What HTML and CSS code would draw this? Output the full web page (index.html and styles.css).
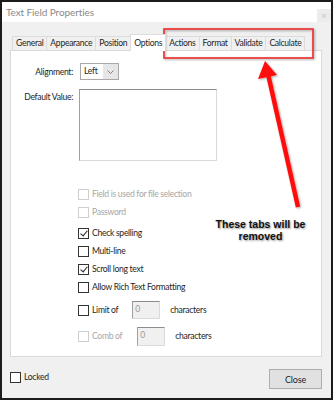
FILE: index.html
```html
<!DOCTYPE html>
<html lang="en">
<head>
    <meta charset="UTF-8">
    <title>Text Field Properties</title>
    <link rel="stylesheet" href="styles.css">
</head>
<body>

    <div class="window">
        <div class="titlebar">
            <span class="title">Text Field Properties</span>
            <span class="close-x">&times;</span>
        </div>

        <div class="body">
            <div class="tabs">
                <div class="tab">General</div>
                <div class="tab">Appearance</div>
                <div class="tab">Position</div>
                <div class="tab active">Options</div>
                <div class="tab">Actions</div>
                <div class="tab">Format</div>
                <div class="tab">Validate</div>
                <div class="tab">Calculate</div>
            </div>

            <div class="panel">
                <div class="field-row">
                    <label class="field-label">Alignment:</label>
                    <div class="select">
                        <span class="select-value">Left</span>
                        <span class="select-arrow">
                            <svg width="7" height="4" viewBox="0 0 7 4"><path d="M0.5 0.5 L3.5 3.5 L6.5 0.5" fill="none" stroke="#777" stroke-width="0.9"/></svg>
                        </span>
                    </div>
                </div>
                <div class="field-row top">
                    <label class="field-label">Default Value:</label>
                    <div class="textarea"></div>
                </div>

                <div class="checks">
                    <div class="check disabled"><span class="box"></span>Field is used for file selection</div>
                    <div class="check disabled"><span class="box"></span>Password</div>
                    <div class="check gap"><span class="box checked"></span>Check spelling</div>
                    <div class="check"><span class="box"></span>Multi-line</div>
                    <div class="check"><span class="box checked"></span>Scroll long text</div>
                    <div class="check"><span class="box"></span>Allow Rich Text Formatting</div>
                    <div class="check limit"><span class="box"></span>Limit of<span class="num num-limit">0</span>characters</div>
                    <div class="check comb disabled"><span class="box"></span>Comb of<span class="num num-comb">0</span><span class="dark">characters</span></div>
                </div>
            </div>

            <div class="footer">
                <div class="check locked"><span class="box"></span>Locked</div>
                <button class="close-btn">Close</button>
            </div>
        </div>

        <!-- annotation drawn over the dialog -->
        <svg class="overlay" width="333" height="400" viewBox="0 0 333 400">
            <defs>
                <filter id="shadow" x="-20%" y="-20%" width="140%" height="140%">
                    <feDropShadow dx="1" dy="1" stdDeviation="0.8" flood-color="#000" flood-opacity="0.35"/>
                </filter>
            </defs>
            <rect x="164" y="29" width="149" height="29" fill="none" stroke="#ec2d2d" stroke-width="1.6" filter="url(#shadow)"/>
            <g filter="url(#shadow)">
                <line x1="298" y1="207" x2="268" y2="74" stroke="#ff0f0f" stroke-width="4.5"/>
                <polygon points="265,61 258,79 277,75" fill="#ff0f0f"/>
            </g>
        </svg>
        <div class="note">These tabs will be<br>removed</div>
    </div>

</body>
</html>
```

FILE: styles.css
```css
* {
    margin: 0;
    padding: 0;
    box-sizing: border-box;
}

body {
    font-family: Lato, "Open Sans", sans-serif;
    font-size: 8.6px;
    letter-spacing: -0.3px;
    color: #1e1e1e;
    background: #fff;
}

.window {
    position: relative;
    width: 333px;
    height: 400px;
    border: 2px solid #1c1c1c;
    display: flex;
    flex-direction: column;
    background: #f0f0f0;
}

.titlebar {
    height: 20px;
    background: #fff;
    display: flex;
    align-items: center;
    justify-content: space-between;
    padding-left: 4px;
}

.title {
    font-size: 10px;
    letter-spacing: -0.1px;
    color: #8a8a8a;
}

.close-x {
    width: 14px;
    height: 13px;
    margin-top: 6px;
    background: #ececec;
    color: #c8c8c8;
    font-size: 10px;
    line-height: 13px;
    text-align: center;
}

.body {
    flex: 1;
    display: flex;
    flex-direction: column;
    padding: 0 9px 0 8px;
}

/* tabs */
.tabs {
    display: flex;
    align-items: flex-end;
    margin-top: 11px;
    padding-left: 2px;
    height: 17px;
}

.tab {
    height: 14px;
    padding: 0 3px;
    line-height: 13px;
    background: #f0f0f0;
    border: 1px solid #dcdcdc;
    border-bottom: none;
    margin-right: -1px;
}

.tab.active {
    height: 17px;
    line-height: 16px;
    background: #fff;
    position: relative;
    z-index: 1;
    margin-bottom: -1px;
    padding: 0 3px;
}

/* white panel */
.panel {
    height: 307px;
    background: #fff;
    border: 1px solid #d9d9d9;
    padding-top: 12px;
}

.field-row {
    display: flex;
    align-items: center;
    margin-bottom: 9px;
}

.field-row.top {
    align-items: flex-start;
}

.field-label {
    width: 62px;
    text-align: right;
    margin-right: 7px;
}

.field-row.top .field-label {
    margin-top: 3px;
    margin-right: 6px;
}

.select {
    width: 39px;
    height: 17px;
    border: 1px solid #a9a9a9;
    display: flex;
    background: #fff;
}

.select-value {
    flex: 1;
    padding-left: 3px;
    line-height: 15px;
}

.select-arrow {
    width: 15px;
    background: #e6e6e6;
    display: flex;
    align-items: center;
    justify-content: center;
}

.textarea {
    width: 138px;
    height: 72px;
    border: 1px solid #dadada;
    border-top-color: #8c8c8c;
    border-left-color: #a0a0a0;
}

/* checkboxes */
.checks {
    margin-top: 24px;
    padding-left: 67px;
}

.check {
    display: flex;
    align-items: center;
    height: 18px;
}

.check.gap {
    margin-top: 3px;
}

.check.limit {
    margin-top: 5px;
}

.check.comb {
    margin-top: 8px;
}

.box {
    width: 11px;
    height: 11px;
    border: 1px solid #333;
    background: #fff;
    margin-right: 3px;
    flex-shrink: 0;
    position: relative;
}

.box.checked::after {
    content: "";
    position: absolute;
    left: 3px;
    top: 0px;
    width: 3px;
    height: 6px;
    border-right: 1px solid #222;
    border-bottom: 1px solid #222;
    transform: rotate(40deg);
}

.check.disabled {
    color: #a6a6a6;
}

.check.disabled .box {
    border-color: #cfcfcf;
}

.dark {
    color: #1e1e1e;
}

.num {
    height: 18px;
    width: 28px;
    background: #f0f0f0;
    border: 1px solid #dadada;
    border-top-color: #8c8c8c;
    border-left-color: #a0a0a0;
    padding-left: 2px;
    line-height: 14px;
    color: #999;
}

.num-limit {
    margin: 0 10px 0 14px;
}

.num-comb {
    height: 19px;
    margin: 0 10px 0 15px;
}

/* footer */
.footer {
    flex: 1;
    display: flex;
    justify-content: space-between;
    align-items: flex-start;
}

.check.locked {
    margin-top: 11px;
    margin-left: 0;
}

.close-btn {
    margin-top: 12px;
    width: 53px;
    height: 20px;
    background: #e1e1e1;
    border: 1px solid #adadad;
    font-family: inherit;
    font-size: 9px;
    letter-spacing: -0.2px;
    color: #1e1e1e;
}

/* annotation */
.overlay {
    position: absolute;
    left: -2px;
    top: -2px;
    pointer-events: none;
}

.note {
    position: absolute;
    left: 206px;
    top: 216px;
    width: 105px;
    text-align: center;
    font-family: "Liberation Sans", Arial, sans-serif;
    font-weight: bold;
    font-size: 10.5px;
    letter-spacing: 0;
    line-height: 12px;
    color: #111;
    text-shadow: 1px 1px 2px rgba(0, 0, 0, 0.45);
}
```
